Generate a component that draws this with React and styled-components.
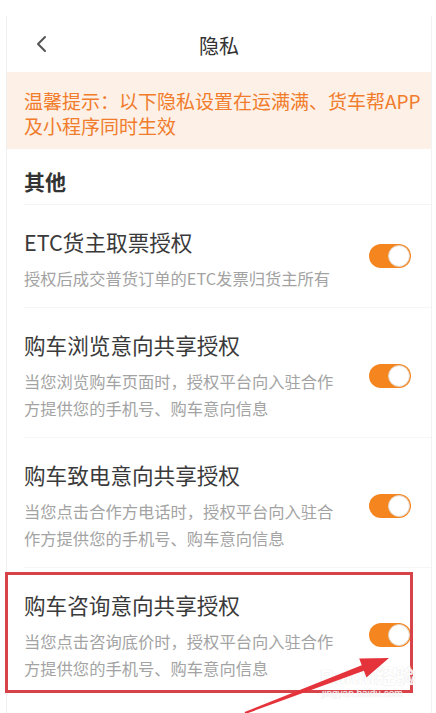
import React, { useState } from 'react';
import styled, { createGlobalStyle } from 'styled-components';

const GlobalStyle = createGlobalStyle`
  html, body {
    margin: 0;
    padding: 0;
    background: #ffffff;
  }
  body {
    font-family: "Noto Sans CJK SC", "Noto Sans", sans-serif;
  }
`;

const Page = styled.div`
  position: relative;
  width: 436px;
  height: 713px;
  overflow: hidden;
  background: #fff;
`;

const Frame = styled.div`
  margin: 16px 4px 0 6px;
  min-height: 697px;
  border-left: 1px solid #efefef;
  border-right: 1px solid #f2f2f2;
`;

const Header = styled.div`
  height: 56px;
  display: grid;
  grid-template-columns: 60px 1fr 60px;
  align-items: center;
`;

const BackButton = styled.button`
  display: flex;
  align-items: center;
  justify-content: center;
  padding: 0 0 0 10px;
  border: 0;
  background: none;
  height: 56px;
  color: #555;
  cursor: pointer;
`;

const Title = styled.h1`
  margin: 0;
  padding-top: 3px;
  text-align: center;
  font-size: 20px;
  font-weight: 400;
  color: #333;
  line-height: 28px;
`;

const Notice = styled.div`
  background: #fdf0e6;
  color: #f07c2c;
  font-size: 19px;
  line-height: 25px;
  padding: 16px 10px 11px 17px;
`;

const Section = styled.div`
  padding-left: 17px;
`;

const SectionTitle = styled.h2`
  margin: 0;
  padding: 18px 0 9px;
  font-size: 21px;
  line-height: 28px;
  font-weight: 700;
  color: #333;
  border-bottom: 1px solid #f4f4f4;
`;

const Row = styled.div`
  position: relative;
  display: flex;
  align-items: center;
  padding: 23px 20px 15px 0;
  border-bottom: 1px solid ${(p) => (p.$last ? 'transparent' : '#f6f6f6')};
`;

const RowText = styled.div`
  flex: 1;
  min-width: 0;
`;

const RowTitle = styled.div`
  font-size: 21.6px;
  line-height: 28px;
  color: #3a3a3a;
  margin-bottom: 9px;
`;

const RowDesc = styled.div`
  font-size: 16.3px;
  line-height: 27px;
  color: #a3a3a3;
  max-width: 318px;
`;

const Switch = styled.button`
  position: relative;
  flex: 0 0 auto;
  width: 42px;
  height: 24px;
  border-radius: 12px;
  border: 0;
  padding: 0;
  margin-top: ${(p) => p.$offset}px;
  background: ${(p) => (p.$on ? '#f5861f' : '#e0e0e0')};
  cursor: pointer;
`;

const Knob = styled.span`
  position: absolute;
  top: 1px;
  left: ${(p) => (p.$on ? '19px' : '1px')};
  width: 20px;
  height: 20px;
  border-radius: 50%;
  background: #fff;
  border: 1px solid #e3d2c2;
`;

const Highlight = styled.div`
  position: absolute;
  top: 4px;
  left: -19px;
  width: 402px;
  height: 115px;
  border: 3px solid #d8434a;
  pointer-events: none;
`;

const Overlay = styled.svg`
  position: absolute;
  left: 0;
  top: 0;
  pointer-events: none;
`;

const Watermark = styled.div`
  position: absolute;
  left: 320px;
  top: 666px;
  display: flex;
  flex-direction: column;
  align-items: flex-start;
  color: #fff;
  font-family: "Liberation Sans", "Noto Sans CJK SC", sans-serif;
  text-shadow: 0 0 1px #cfcfcf;
  opacity: 0.85;
  pointer-events: none;
`;

const WatermarkLogo = styled.span`
  font-size: 20px;
  font-weight: 700;
  line-height: 22px;
`;

const WatermarkUrl = styled.span`
  font-size: 10px;
  line-height: 12px;
  margin-left: 2px;
`;

const items = [
  {
    title: 'ETC货主取票授权',
    desc: '授权后成交普货订单的ETC发票归货主所有',
    offset: -9,
  },
  {
    title: '购车浏览意向共享授权',
    desc: '当您浏览购车页面时，授权平台向入驻合作方提供您的手机号、购车意向信息',
    offset: -2,
  },
  {
    title: '购车致电意向共享授权',
    desc: '当您点击合作方电话时，授权平台向入驻合作方提供您的手机号、购车意向信息',
    offset: -2,
  },
  {
    title: '购车咨询意向共享授权',
    desc: '当您点击咨询底价时，授权平台向入驻合作方提供您的手机号、购车意向信息',
    offset: -3,
    highlight: true,
  },
];

export default function App() {
  const [flags, setFlags] = useState(items.map(() => true));

  const toggle = (i) => setFlags((f) => f.map((v, j) => (j === i ? !v : v)));

  return (
    <Page>
      <GlobalStyle />
      <Frame>
        <Header>
          <BackButton aria-label="返回">
            <svg width="14" height="18" viewBox="0 0 14 18">
              <path d="M10 2 L3 9 L10 16" fill="none" stroke="currentColor" strokeWidth="2" strokeLinecap="round" strokeLinejoin="round" />
            </svg>
          </BackButton>
          <Title>隐私</Title>
          <span />
        </Header>
        <Notice>温馨提示：以下隐私设置在运满满、货车帮APP及小程序同时生效</Notice>
        <Section>
          <SectionTitle>其他</SectionTitle>
          {items.map((item, i) => (
            <Row key={item.title} $last={i === items.length - 1}>
              <RowText>
                <RowTitle>{item.title}</RowTitle>
                <RowDesc>{item.desc}</RowDesc>
              </RowText>
              <Switch $on={flags[i]} $offset={item.offset} onClick={() => toggle(i)}>
                <Knob $on={flags[i]} />
              </Switch>
              {item.highlight && <Highlight />}
            </Row>
          ))}
        </Section>
      </Frame>
      <Watermark>
        <WatermarkLogo>Baidu经验</WatermarkLogo>
        <WatermarkUrl>jingyan.baidu.com</WatermarkUrl>
      </Watermark>
      <Overlay width="436" height="713" viewBox="0 0 436 713">
        <polygon
          points="244.6,712 361.7,665.2 359.2,658.6 389,658 366.4,677.4 363.9,670.8 245.4,714"
          fill="#e5333b"
        />
      </Overlay>
    </Page>
  );
}
